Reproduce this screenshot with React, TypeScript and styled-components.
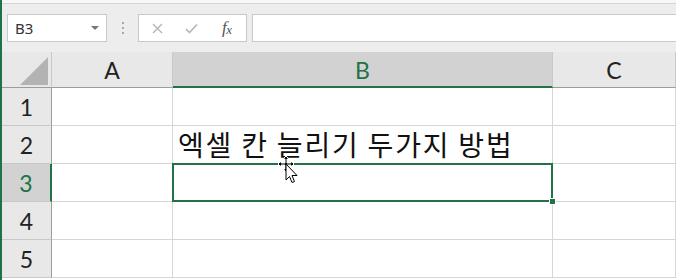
import React from 'react';
import styled, { createGlobalStyle } from 'styled-components';

const GREEN = '#217346';

const Global = createGlobalStyle`
  html, body { margin: 0; padding: 0; background: #fff; }
  body { width: 676px; height: 280px; overflow: hidden; font-family: "Noto Sans", "Noto Sans CJK KR", sans-serif; }
`;

const Window = styled.div`
  position: relative;
  width: 676px; height: 280px; overflow: hidden;
  border-left: 2px solid ${GREEN};
  box-sizing: border-box;
  background: #fff;
`;

const TopStrip = styled.div`
  height: 3px; background: #f7f7f7; border-bottom: 1px solid #d6d6d6;
`;

const FormulaBar = styled.div`
  display: flex; align-items: center;
  height: 48px; box-sizing: border-box;
  padding: 10px 0 10px 5px;
  background: #ededed;
`;

const Box = styled.div<{ $w?: number; $grow?: boolean }>`
  height: 28px; box-sizing: border-box;
  ${p => (p.$w ? `width: ${p.$w}px;` : '')}
  ${p => (p.$grow ? 'flex: 1;' : '')}
  background: #fff;
  border: 1px solid #c9c9c9;
  ${p => (p.$grow ? 'border-right: none;' : '')}
  display: flex; align-items: center;
`;

const NameText = styled.span`
  flex: 1; padding-left: 7px;
  font-family: "Noto Sans", sans-serif; font-size: 15px; color: #333;
`;

const DropArrow = styled.span`
  width: 0; height: 0; margin-right: 7px;
  border-left: 4px solid transparent; border-right: 4px solid transparent;
  border-top: 4px solid #777;
`;

const Dots = styled.div`
  width: 31px; display: flex; flex-direction: column; align-items: center; gap: 3px;
  span { width: 2px; height: 2px; background: #a8a8a8; display: block; }
`;

const FxButtons = styled.div`
  display: flex; align-items: center; width: 100%; padding-left: 13px; box-sizing: border-box;
`;

const FxIcon = styled.span<{ $w: number }>`
  width: ${p => p.$w}px; display: flex; align-items: center; justify-content: flex-start;
`;

const FxLabel = styled.span`
  font-family: "Liberation Serif", serif; font-style: italic; font-size: 17px; color: #555;
  letter-spacing: -0.5px;
  .x { font-size: 13px; position: relative; top: 1px; }
`;

const Spacer = styled.div`width: 5px;`;

const Grid = styled.div`
  display: grid;
  grid-template-columns: 50px 121px 380px 1fr;
  grid-template-rows: 36px repeat(5, 38px);
`;

const Corner = styled.div`
  position: relative;
  background: #e8e8e8;
  border-right: 1px solid #c8c8c8;
  border-bottom: 1px solid #9c9c9c;
  box-sizing: border-box;
`;

const CornerTri = styled.div`
  position: absolute; right: 3px; bottom: 2px;
  width: 0; height: 0;
  border-left: 28px solid transparent;
  border-bottom: 28px solid #b3b3b3;
`;

const ColHead = styled.div<{ $sel?: boolean }>`
  display: flex; align-items: center; justify-content: center;
  box-sizing: border-box;
  background: ${p => (p.$sel ? '#d2d2d2' : '#e8e8e8')};
  border-right: 1px solid #c8c8c8;
  border-bottom: ${p => (p.$sel ? `2px solid ${GREEN}` : '1px solid #9c9c9c')};
  padding-top: ${p => (p.$sel ? '1px' : '0')};
  font-family: Lato, "Noto Sans", sans-serif; font-size: 23px;
  color: ${p => (p.$sel ? GREEN : '#222')};
`;

const RowHead = styled.div<{ $sel?: boolean }>`
  display: flex; align-items: center; justify-content: center;
  box-sizing: border-box;
  background: ${p => (p.$sel ? '#d2d2d2' : '#e8e8e8')};
  border-bottom: 1px solid #c8c8c8;
  border-right: ${p => (p.$sel ? `2px solid ${GREEN}` : '1px solid #9c9c9c')};
  font-family: Lato, "Noto Sans", sans-serif; font-size: 23px;
  color: ${p => (p.$sel ? GREEN : '#222')};
`;

const Cell = styled.div<{ $sel?: boolean }>`
  position: relative;
  box-sizing: border-box;
  border-right: 1px solid #d6d6d6;
  border-bottom: 1px solid #d6d6d6;
  display: flex; align-items: flex-end;
  ${p =>
    p.$sel
      ? `
    &::after {
      content: ''; position: absolute; left: -1px; top: -1px; right: -1px; bottom: -1px;
      border: 2px solid ${GREEN}; z-index: 2; pointer-events: none;
    }
  `
      : ''}
`;

const CellText = styled.span`
  white-space: nowrap;
  padding: 0 0 2px 5px;
  font-family: "Noto Sans CJK KR", "Noto Sans", sans-serif; font-size: 28px; line-height: 34px;
  letter-spacing: 1.8px;
  color: #111;
`;

const FillHandle = styled.div`
  position: absolute; right: -4px; bottom: -4px; width: 5px; height: 5px;
  background: ${GREEN}; border: 1px solid #fff; z-index: 3;
`;

const Cursor = styled.svg`
  position: absolute; left: 274px; top: 155px; z-index: 5;
`;

const rows = [1, 2, 3, 4, 5];

export default function App() {
  return (
    <Window>
      <Global />
      <TopStrip />
      <FormulaBar>
        <Box $w={100}>
          <NameText>B3</NameText>
          <DropArrow />
        </Box>
        <Dots>
          <span />
          <span />
          <span />
        </Dots>
        <Box $w={109}>
          <FxButtons>
            <FxIcon $w={33}>
              <svg width="11" height="11" viewBox="0 0 11 11">
                <path d="M1 1L10 10M10 1L1 10" stroke="#b5b5b5" strokeWidth="1.4" fill="none" />
              </svg>
            </FxIcon>
            <FxIcon $w={37}>
              <svg width="13" height="11" viewBox="0 0 13 11">
                <path d="M1 6L4.5 9.5L12 1.5" stroke="#b5b5b5" strokeWidth="1.6" fill="none" />
              </svg>
            </FxIcon>
            <FxLabel>
              f<span className="x">x</span>
            </FxLabel>
          </FxButtons>
        </Box>
        <Spacer />
        <Box $grow />
      </FormulaBar>
      <Grid>
        <Corner>
          <CornerTri />
        </Corner>
        <ColHead>A</ColHead>
        <ColHead $sel>B</ColHead>
        <ColHead>C</ColHead>
        {rows.map(r => (
          <React.Fragment key={r}>
            <RowHead $sel={r === 3}>{r}</RowHead>
            <Cell />
            <Cell $sel={r === 3}>
              {r === 2 && <CellText>엑셀 칸 늘리기 두가지 방법</CellText>}
              {r === 3 && <FillHandle />}
            </Cell>
            <Cell />
          </React.Fragment>
        ))}
      </Grid>
      <Cursor width="24" height="30" viewBox="0 0 24 30">
        {/* move cross */}
        <path
          d="M10 1L13 4H11V8H15V6L18 9L15 12V10H11V14H13L10 17L7 14H9V10H5V12L2 9L5 6V8H9V4H7Z"
          fill="#000"
          stroke="#fff"
          strokeWidth="1"
        />
        {/* pointer arrow */}
        <path
          d="M10 9V25L13.5 21.5L16 27.5L18.5 26.5L16 20.5H21Z"
          fill="#fff"
          stroke="#000"
          strokeWidth="1"
          strokeLinejoin="round"
        />
      </Cursor>
    </Window>
  );
}
